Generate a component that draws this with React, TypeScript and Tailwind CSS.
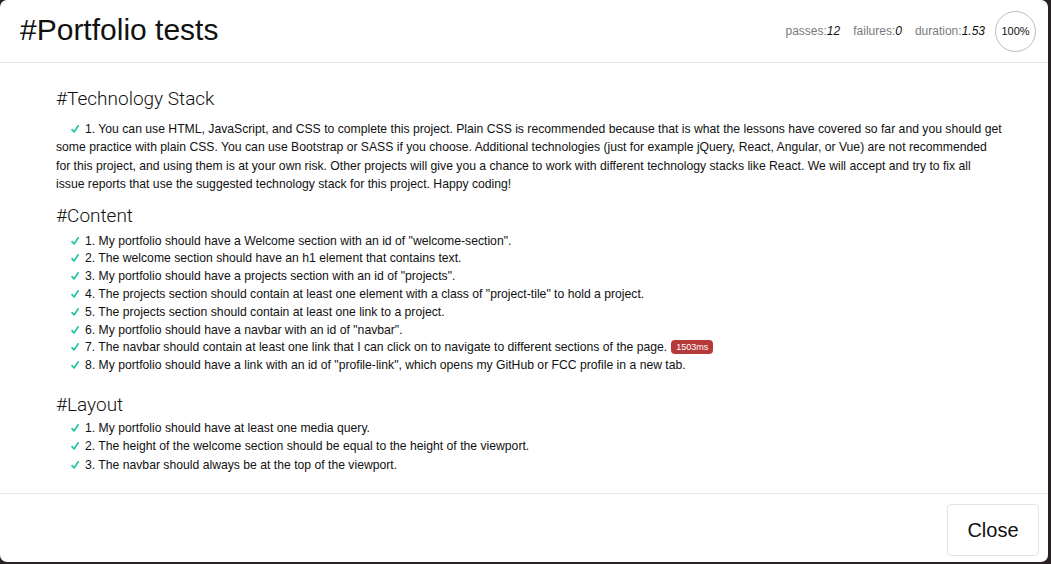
import React from 'react';

type Section = {
  title: string;
  headCls: string;
  itemCls: string;
  items: { text: string; ms?: number }[];
};

const sections: Section[] = [
  {
    title: '#Technology Stack',
    headCls: 'mt-0 mb-[9px]',
    itemCls: 'leading-[18.4px]',
    items: [
      {
        text: '1. You can use HTML, JavaScript, and CSS to complete this project. Plain CSS is recommended because that is what the lessons have covered so far and you should get some practice with plain CSS. You can use Bootstrap or SASS if you choose. Additional technologies (just for example jQuery, React, Angular, or Vue) are not recommended for this project, and using them is at your own risk. Other projects will give you a chance to work with different technology stacks like React. We will accept and try to fix all issue reports that use the suggested technology stack for this project. Happy coding!',
      },
    ],
  },
  {
    title: '#Content',
    headCls: 'mt-[10px] mb-[5px]',
    itemCls: 'leading-[17.8px]',
    items: [
      { text: '1. My portfolio should have a Welcome section with an id of "welcome-section".' },
      { text: '2. The welcome section should have an h1 element that contains text.' },
      { text: '3. My portfolio should have a projects section with an id of "projects".' },
      { text: '4. The projects section should contain at least one element with a class of "project-tile" to hold a project.' },
      { text: '5. The projects section should contain at least one link to a project.' },
      { text: '6. My portfolio should have a navbar with an id of "navbar".' },
      { text: '7. The navbar should contain at least one link that I can click on to navigate to different sections of the page.', ms: 1503 },
      { text: '8. My portfolio should have a link with an id of "profile-link", which opens my GitHub or FCC profile in a new tab.' },
    ],
  },
  {
    title: '#Layout',
    headCls: 'mt-[18px] mb-[2px]',
    itemCls: 'leading-[18.3px]',
    items: [
      { text: '1. My portfolio should have at least one media query.' },
      { text: '2. The height of the welcome section should be equal to the height of the viewport.' },
      { text: '3. The navbar should always be at the top of the viewport.' },
    ],
  },
];

function Check() {
  return (
    <svg viewBox="0 0 8 8" className="mr-[6px] inline-block h-[8px] w-[8px] align-[0px]">
      <path d="M1 4.6 L3.1 7 L7.2 0.8" fill="none" stroke="#1cc3a2" strokeWidth="1.6" strokeLinecap="round" strokeLinejoin="round" />
    </svg>
  );
}

function Stat({ label, value }: { label: string; value: string }) {
  return (
    <span className="text-[#7a7a7a]">
      {label}:<em className="text-[#111]">{value}</em>
    </span>
  );
}

export default function App() {
  return (
    <div className="h-[564px] w-[1051px] bg-[#2a2126] font-['Liberation_Sans',Arial,sans-serif] text-[#111]">
      <div className="flex h-[562px] w-[1048px] flex-col overflow-hidden rounded-[7px] bg-white">
        <header className="flex h-[63px] shrink-0 items-center justify-between border-b border-[#e5e5e5] pl-[20px] pr-[12px]">
          <h1 className="mt-[-2px] text-[30px] leading-none">#Portfolio tests</h1>
          <div className="flex items-center gap-[13px] text-[12px]">
            <Stat label="passes" value="12" />
            <Stat label="failures" value="0" />
            <Stat label="duration" value="1.53" />
            <div className="ml-[-3px] flex h-[41px] w-[41px] items-center justify-center rounded-full border border-[#bbb] text-[11px] text-[#111]">
              100%
            </div>
          </div>
        </header>

        <main className="flex-1 pl-[56px] pr-[46px] pt-[24px]">
          {sections.map((s) => (
            <section key={s.title}>
              <h2 className={`${s.headCls} font-['Roboto',sans-serif] text-[19px] font-light leading-[24px] text-[#111]`}>
                {s.title}
              </h2>
              <ul>
                {s.items.map((it) => (
                  <li key={it.text} className={`${s.itemCls} indent-[15px] text-[12.2px]`}>
                    <Check />
                    {it.text}
                    {it.ms && (
                      <span className="ml-[4px] inline-block rounded-[4px] bg-[#b73a3a] px-[5px] indent-0 align-[1px] text-[9px] leading-[14px] text-white">
                        {it.ms}ms
                      </span>
                    )}
                  </li>
                ))}
              </ul>
            </section>
          ))}
        </main>

        <footer className="flex h-[69px] shrink-0 items-center justify-end border-t border-[#e5e5e5] pr-[9px] pt-[4px]">
          <button className="h-[52px] w-[92px] rounded-[4px] border border-[#e2e2e2] text-[20px] text-[#111]">
            Close
          </button>
        </footer>
      </div>
    </div>
  );
}
